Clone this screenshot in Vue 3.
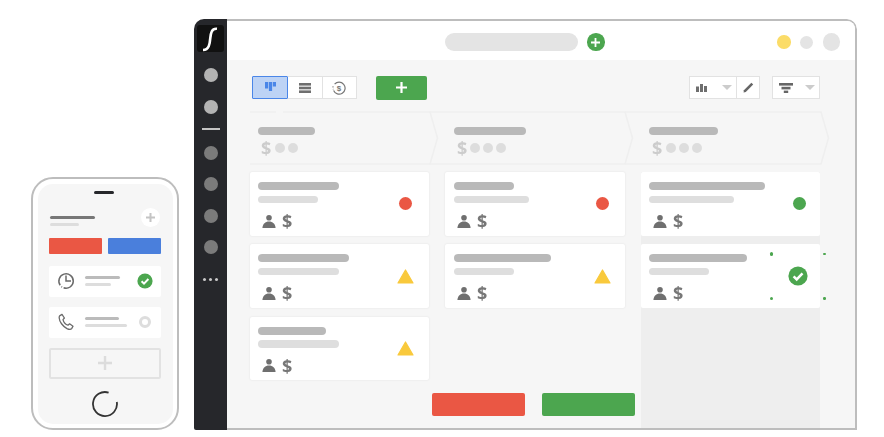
<template>
  <div class="scene">
    <div class="phone">
      <div class="phone-inner">
        <div class="speaker"></div>
        <div class="phone-head">
          <div class="phone-title">
            <div class="pt-a"></div>
            <div class="pt-b"></div>
          </div>
          <div class="phone-plus">
            <svg width="11" height="11" viewBox="0 0 11 11"><path d="M5.5 1v9M1 5.5h9" stroke="#c4c4c4" stroke-width="2" /></svg>
          </div>
        </div>
        <div class="phone-btns">
          <div class="pb red"></div>
          <div class="pb blue"></div>
        </div>
        <div class="phone-row">
          <svg class="row-icon" width="18" height="18" viewBox="0 0 18 18" fill="none" stroke="#6b6b6b" stroke-width="1.5">
            <path d="M3.2 13.2A7.2 7.2 0 1 1 6.6 15.8" />
            <path d="M4.4 14.6l.6.5" />
            <path d="M9 3.6V9H14" />
          </svg>
          <div class="row-lines">
            <div class="rl dark w35"></div>
            <div class="rl light w26"></div>
          </div>
          <svg class="row-end" width="16" height="16" viewBox="0 0 16 16">
            <circle cx="8" cy="8" r="7.6" fill="#4ca64f" />
            <path d="M4.6 8.2l2.4 2.4 4.4-4.6" fill="none" stroke="#fff" stroke-width="2" />
          </svg>
        </div>
        <div class="phone-row">
          <svg class="row-icon" width="18" height="18" viewBox="0 0 18 18" fill="none" stroke="#6b6b6b" stroke-width="1.3" stroke-linejoin="round">
            <path d="M3 2.6 5 1.4 7.4 5 6 6.6C6.6 9 8.8 11.6 11 12.2L12.6 10.8 16 13.2 14.8 15.4C14 16.6 12 16.6 10 15.6 5.6 13.2 2.4 8.6 2.2 5 2.1 4 2.4 3.1 3 2.6Z" />
          </svg>
          <div class="row-lines">
            <div class="rl dark w34"></div>
            <div class="rl light w42"></div>
          </div>
          <div class="row-ring"></div>
        </div>
        <div class="phone-add">
          <svg width="14" height="14" viewBox="0 0 14 14"><path d="M7 0v14M0 7h14" stroke="#dcdcdc" stroke-width="2.4" /></svg>
        </div>
        <svg class="home" width="26" height="26" viewBox="0 0 26 26" fill="none">
          <path d="M16.6 1.6A12 12 0 1 0 24.8 11" stroke="#333" stroke-width="1.8" />
        </svg>
      </div>
    </div>

    <div class="window">
      <aside class="sidebar">
        <div class="logo">
          <svg width="27" height="27" viewBox="0 0 27 27" fill="none">
            <path d="M20 3.8C14.6 3.2 13.8 8 13.3 13 12.8 19 12 25 6 25" stroke="#fff" stroke-width="2.6" />
          </svg>
        </div>
        <div class="nav-dot lit first"></div>
        <div class="nav-dot lit"></div>
        <div class="nav-line"></div>
        <div class="nav-dot after-line"></div>
        <div class="nav-dot"></div>
        <div class="nav-dot"></div>
        <div class="nav-dot"></div>
        <div class="nav-more"><i></i><i></i><i></i></div>
      </aside>

      <div class="content">
        <header class="topbar">
          <div class="search"></div>
          <div class="search-add">
            <svg width="9" height="9" viewBox="0 0 9 9"><path d="M4.5 0v9M0 4.5h9" stroke="#fff" stroke-width="1.8" /></svg>
          </div>
          <div class="dots">
            <div class="d yellow"></div>
            <div class="d grey"></div>
            <div class="d big"></div>
          </div>
        </header>

        <main class="main">
          <div class="toolbar">
            <div class="tool-left">
              <div class="seg">
                <div class="seg-btn active">
                  <svg width="11" height="9" viewBox="0 0 11 9" fill="#4a86e8"><rect x="0" y="0" width="3.2" height="6.5" /><rect x="3.9" y="0" width="3.2" height="9" /><rect x="7.8" y="0" width="3.2" height="4.5" /></svg>
                </div>
                <div class="seg-btn">
                  <svg width="12" height="10" viewBox="0 0 12 10" fill="#6f6f6f"><rect width="12" height="2.6" /><rect y="3.7" width="12" height="2.6" /><rect y="7.4" width="12" height="2.6" /></svg>
                </div>
                <div class="seg-btn">
                  <svg width="14" height="14" viewBox="0 0 14 14" fill="none">
                    <path d="M2.6 3.2A6 6 0 1 1 1.6 9.6" stroke="#777" stroke-width="1.2" />
                    <path d="M1 5.2v1.4M1.2 7.9l.1.4" stroke="#777" stroke-width="1.1" />
                    <text x="7" y="10" text-anchor="middle" class="seg-dollar">$</text>
                  </svg>
                </div>
              </div>
              <div class="add-btn">
                <svg width="11" height="11" viewBox="0 0 11 11"><path d="M5.5 0v11M0 5.5h11" stroke="#fff" stroke-width="2.2" /></svg>
              </div>
            </div>
            <div class="tool-right">
              <div class="box box-chart">
                <div class="box-part">
                  <svg width="11" height="8" viewBox="0 0 11 8" fill="#6f6f6f"><rect y="2.5" width="3" height="5.5" /><rect x="4" width="3" height="8" /><rect x="8" y="2" width="3" height="6" /></svg>
                  <span class="caret"></span>
                </div>
                <div class="box-pen">
                  <svg width="11" height="11" viewBox="0 0 11 11"><path d="M.6 10.4.9 8.2 8.4.8 10.2 2.6 2.8 10Z" fill="#666" /></svg>
                </div>
              </div>
              <div class="box box-filter">
                <svg width="14" height="10" viewBox="0 0 14 10" fill="#666"><rect width="14" height="2.6" /><rect x="2.5" y="3.8" width="9" height="2.6" /><rect x="4.8" y="7.6" width="4.4" height="2.4" /></svg>
                <span class="caret"></span>
              </div>
            </div>
          </div>

          <div class="stages">
            <div v-for="(s, i) in stages" :key="i" class="stage">
              <svg class="stage-bg" width="190" height="54" viewBox="0 0 190 54" fill="none" stroke="#efefef" stroke-width="1.6">
                <path v-if="i === 0" d="M0 1H26M33 1H180L187.5 27 180 53H0" />
                <path v-else d="M-16 1H180L187.5 27 180 53H-16" />
              </svg>
              <div class="stage-title" :style="{ width: s.w + 'px' }"></div>
              <div class="stage-meta">
                <span class="stage-dollar">$</span>
                <i v-for="n in s.dots" :key="n"></i>
              </div>
            </div>
          </div>

          <div class="board">
            <div v-for="(col, c) in columns" :key="c" class="col" :class="'col-' + (c + 1)">
              <div v-for="(card, j) in col" :key="j" class="card">
                <div class="card-body">
                  <div class="bar-a" :style="{ width: card.a + 'px' }"></div>
                  <div class="bar-b" :style="{ width: card.b + 'px' }"></div>
                  <div class="meta">
                    <svg width="14" height="13" viewBox="0 0 14 13" fill="#6f6f6f">
                      <circle cx="7" cy="2.8" r="2.8" />
                      <path d="M0.4 13C.8 9 3.2 6.6 7 6.6S13.2 9 13.6 13Z" />
                    </svg>
                    <span class="dollar">$</span>
                  </div>
                </div>
                <div class="status">
                  <div v-if="card.s === 'red'" class="circle red"></div>
                  <div v-else-if="card.s === 'green'" class="circle green"></div>
                  <svg v-else-if="card.s === 'warn'" width="17" height="15" viewBox="0 0 17 15">
                    <path d="M8.5 1 16 14H1Z" fill="#f9c93c" stroke="#f9c93c" stroke-width="1.2" stroke-linejoin="round" />
                  </svg>
                  <svg v-else class="done" width="20" height="20" viewBox="0 0 20 20">
                    <circle cx="10" cy="10" r="9.6" fill="#4ca64f" />
                    <path d="M5.6 10.4l3.1 3 5.8-6" fill="none" stroke="#fff" stroke-width="2.5" />
                  </svg>
                </div>
                <template v-if="card.s === 'done'">
                  <i class="spark big tl"></i>
                  <i class="spark tr"></i>
                  <i class="spark big bl"></i>
                  <i class="spark br"></i>
                </template>
              </div>
            </div>
            <div class="drop lost"></div>
            <div class="drop won"></div>
          </div>
        </main>
      </div>
    </div>
  </div>
</template>

<script setup>
const stages = [
  { w: 57, dots: 2 },
  { w: 72, dots: 3 },
  { w: 69, dots: 3 }
]

const columns = [
  [
    { a: 81, b: 60, s: 'red' },
    { a: 91, b: 81, s: 'warn' },
    { a: 68, b: 81, s: 'warn' }
  ],
  [
    { a: 60, b: 75, s: 'red' },
    { a: 97, b: 60, s: 'warn' }
  ],
  [
    { a: 116, b: 85, s: 'green' },
    { a: 98, b: 60, s: 'done' }
  ]
]
</script>

<style>
html, body { margin: 0; background: #fff; }
</style>

<style scoped>
.scene {
  width: 884px; height: 437px; display: flex; align-items: flex-start;
  box-sizing: border-box; padding: 19px 0 0 31px; overflow: hidden;
  font-family: "Liberation Sans", Arial, sans-serif;
}
i { display: block; }

/* phone */
.phone {
  width: 148px; height: 253px; margin-top: 158px; box-sizing: border-box; flex: none;
  border: 2.5px solid #bdbdbd; border-radius: 22px; padding: 4.5px; background: #fff;
}
.phone-inner {
  height: 100%; box-sizing: border-box; background: #f6f6f6; border-radius: 15px;
  padding: 7px 12px 0 11px; display: flex; flex-direction: column;
}
.speaker { width: 20px; height: 3px; border-radius: 2px; background: #26272b; align-self: center; margin-left: -1px; }
.phone-head { display: flex; justify-content: space-between; height: 20px; margin-top: 14px; }
.phone-title { padding: 8px 0 0 1px; }
.pt-a { width: 45px; height: 3px; background: #777; border-radius: 2px; }
.pt-b { width: 29px; height: 3.5px; background: #ddd; border-radius: 2px; margin-top: 4px; }
.phone-plus {
  width: 19px; height: 19px; border-radius: 50%; background: #fff; margin: 0.5px 1px 0 0;
  display: flex; align-items: center; justify-content: center;
}
.phone-btns { display: flex; gap: 6px; margin-top: 10px; }
.pb { flex: 1; height: 16px; border-radius: 1px; }
.pb.red { background: #ea5744; }
.pb.blue { background: #4a7fdc; }
.phone-row {
  height: 31px; background: #fff; border-radius: 2px; margin-top: 10px;
  display: flex; align-items: center; padding: 0 8px 0 8px;
}
.phone-btns + .phone-row { margin-top: 12px; }
.row-icon { flex: none; }
.row-lines { margin-left: 10px; flex: 1; }
.rl { height: 3.5px; border-radius: 2px; }
.rl + .rl { margin-top: 3.5px; }
.rl.dark { background: #bbb; }
.rl.light { background: #ddd; }
.w35 { width: 35px; }
.w26 { width: 26px; }
.w34 { width: 34px; }
.w42 { width: 42px; }
.row-end { flex: none; }
.row-ring {
  width: 12px; height: 12px; box-sizing: border-box; border: 3px solid #ddd;
  border-radius: 50%; margin-right: 1.5px; flex: none;
}
.phone-add {
  height: 31px; box-sizing: border-box; margin-top: 10px; border: 2px solid #e2e2e2;
  border-radius: 2px; display: flex; align-items: center; justify-content: center;
}
.home { align-self: center; margin-top: 12px; }

/* window */
.window {
  width: 663px; height: 411px; margin-left: 15px; flex: none; display: flex;
  border-radius: 10px 10px 0 2px; overflow: hidden;
}
.sidebar {
  width: 33px; flex: none; background: #26272b; display: flex; flex-direction: column;
  align-items: center; padding-top: 6px; box-sizing: border-box;
}
.logo { width: 27px; height: 27px; background: #111; border-radius: 3px; flex: none; }
.nav-dot { width: 14px; height: 14px; border-radius: 50%; background: #7b7b7b; margin-top: 17.5px; flex: none; }
.nav-dot.lit { background: #b3b3b3; margin-top: 18px; }
.nav-dot.first { margin-top: 15.5px; }
.nav-line { width: 18px; height: 2px; background: #c4c4c4; margin-top: 14.5px; flex: none; }
.nav-dot.after-line { margin-top: 15.5px; }
.nav-more { display: flex; gap: 2.5px; margin-top: 23.5px; }
.nav-more i { width: 3.5px; height: 3.5px; border-radius: 50%; background: #c9c9c9; }

.content {
  flex: 1; min-width: 0; display: flex; flex-direction: column; box-sizing: border-box;
  border: 2px solid #bdbdbd; border-left: 0; border-top-right-radius: 10px; overflow: hidden;
}
.topbar {
  height: 39px; flex: none; background: #fff; display: flex; align-items: center;
  box-sizing: border-box; padding: 3px 15px 0 218px;
}
.search { width: 133px; height: 18px; border-radius: 9px; background: #e4e4e4; }
.search-add {
  width: 17.5px; height: 17.5px; border-radius: 50%; background: #4ca64f; margin-left: 9px;
  display: flex; align-items: center; justify-content: center;
}
.dots { margin-left: auto; display: flex; align-items: center; gap: 9.5px; }
.d { border-radius: 50%; }
.d.yellow { width: 13.5px; height: 13.5px; background: #fbdc68; }
.d.grey { width: 13px; height: 13px; background: #e4e4e4; }
.d.big { width: 17.5px; height: 17.5px; background: #e4e4e4; }

.main {
  flex: 1; min-height: 0; background: #f6f6f6; display: flex; flex-direction: column;
  padding: 16px 35px 0 22.5px;
}
.toolbar { display: flex; justify-content: space-between; height: 23px; flex: none; padding-left: 2.5px; }
.tool-left { display: flex; }
.seg { display: flex; width: 105px; }
.seg-btn {
  flex: 1; box-sizing: border-box; background: #fff; border: 1px solid #e2e2e2; border-left: 0;
  display: flex; align-items: center; justify-content: center;
}
.seg-btn.active {
  flex: none; width: 36px; background: #bdd3f5; border: 1.5px solid #4a86e8; border-radius: 1px;
  padding-bottom: 2px;
}
.seg-dollar { font: bold 8px "Liberation Sans", Arial, sans-serif; fill: #777; }
.add-btn {
  width: 51px; height: 24px; margin: -0.5px 0 0 19px; background: #4ca64f; border-radius: 2px;
  display: flex; align-items: center; justify-content: center;
}
.tool-right { display: flex; gap: 12px; }
.box {
  box-sizing: border-box; background: #fff; border: 1px solid #e2e2e2; display: flex; align-items: center;
}
.box-chart { width: 71px; }
.box-part {
  flex: 1; height: 100%; display: flex; align-items: center; justify-content: space-between;
  padding: 0 4px 0 6px; border-right: 1px solid #e2e2e2;
}
.box-pen { width: 22px; display: flex; justify-content: center; }
.box-filter { width: 48px; justify-content: space-between; padding: 0 4px 0 5.5px; }
.caret {
  width: 0; height: 0; border-left: 5.5px solid transparent; border-right: 5.5px solid transparent;
  border-top: 5px solid #ccc;
}

.stages { display: grid; grid-template-columns: repeat(3, 179.5px); gap: 16px; margin-top: 12px; flex: none; }
.stage { position: relative; height: 53px; padding: 16px 0 0 8.5px; box-sizing: border-box; }
.stage-bg { position: absolute; left: 0; top: -0.5px; overflow: visible; }
.stage-title { position: relative; height: 8px; border-radius: 4px; background: #b9b9b9; }
.stage-meta { position: relative; display: flex; align-items: center; height: 14px; margin-top: 6px; padding-left: 3px; }
.stage-dollar {
  font-family: "Open Sans", "Liberation Sans", sans-serif; font-size: 18px; font-weight: 700;
  line-height: 14px; color: #ccc; width: 13.5px; will-change: transform;
}
.stage-meta i { width: 10px; height: 10px; border-radius: 50%; background: #ddd; margin-right: 3px; }

.board {
  position: relative; flex: 1; min-height: 0; margin-top: 8px;
  display: grid; grid-template-columns: repeat(3, 179.5px); gap: 16px;
}
.col { display: flex; flex-direction: column; gap: 8.75px; }
.col-3 { background: #eeeeee; }
.card {
  position: relative; height: 63.5px; flex: none; box-sizing: border-box; background: #fff; border-radius: 2px;
  box-shadow: 0 0 2px rgba(0, 0, 0, .1); display: flex; align-items: center; justify-content: space-between;
  padding: 0 15.5px 0 8.5px;
}
.col-2 .card { padding-right: 13.5px; }
.col-3 .card { padding-right: 12px; box-shadow: none; }
.card-body { align-self: flex-start; padding-top: 10px; }
.bar-a { height: 8px; border-radius: 4px; background: #b9b9b9; }
.bar-b { height: 7.5px; border-radius: 4px; background: #dedede; margin-top: 5.5px; }
.meta { display: flex; align-items: center; height: 14px; margin-top: 11px; padding-left: 3.5px; }
.dollar {
  font-family: "Open Sans", "Liberation Sans", sans-serif; font-size: 18px; font-weight: 700;
  line-height: 14px; color: #777; margin-left: 6px; will-change: transform;
}
.status { width: 17px; height: 17px; display: flex; align-items: center; justify-content: center; flex: none; }
.circle { width: 13px; height: 13px; border-radius: 50%; }
.circle.red { background: #ea5744; }
.circle.green { background: #4ca64f; }
.done { flex: none; margin-right: 3px; }
.spark { position: absolute; width: 2.4px; height: 2.4px; border-radius: 50%; background: #4ca64f; }
.spark.big { width: 3.6px; height: 3.6px; }
.tl { left: 129.2px; top: 8px; }
.tr { left: 182.8px; top: 8.6px; }
.bl { left: 129.2px; top: 52.5px; }
.br { left: 182.8px; top: 53px; }
.drop { position: absolute; top: 220.5px; width: 92.5px; height: 23px; border-radius: 2px; }
.lost { left: 182.5px; background: #ea5744; }
.won { left: 292.5px; background: #4ca64f; }
</style>
